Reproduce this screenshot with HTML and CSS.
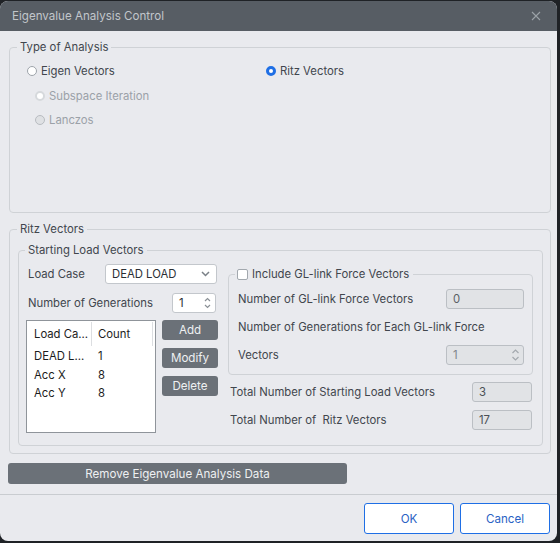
FILE: index.html
```html
<!DOCTYPE html>
<html lang="en">
<head>
    <meta charset="UTF-8">
    <title>Eigenvalue Analysis Control</title>
    <link rel="stylesheet" href="styles.css">
</head>
<body>
    <div class="window">
        <div class="titlebar">
            <span class="title">Eigenvalue Analysis Control</span>
            <svg class="close" width="10" height="10" viewBox="0 0 10 10">
                <path d="M1 1 L9 9 M9 1 L1 9" stroke="#9ba1a7" stroke-width="1.1" fill="none"/>
            </svg>
        </div>

        <div class="dialog-body">
            <fieldset class="group type-group">
                <legend>Type of Analysis</legend>
                <div class="type-grid">
                    <div class="type-col">
                        <div class="radio"><span class="dot"></span>Eigen Vectors</div>
                        <div class="radio sub disabled dim-checked"><span class="dot"></span>Subspace Iteration</div>
                        <div class="radio sub disabled"><span class="dot"></span>Lanczos</div>
                    </div>
                    <div class="type-col">
                        <div class="radio checked"><span class="dot"></span>Ritz Vectors</div>
                    </div>
                </div>
            </fieldset>

            <fieldset class="group ritz-group">
                <legend>Ritz Vectors</legend>
                <div class="ritz-inner">
                    <fieldset class="group slv-group">
                        <legend>Starting Load Vectors</legend>
                        <div class="slv-cols">
                            <div class="slv-left">
                                <div class="field-row">
                                    <span class="label lc-label">Load Case</span>
                                    <div class="select">
                                        <span>DEAD LOAD</span>
                                        <svg width="9" height="6" viewBox="0 0 9 6">
                                            <path d="M1 1 L4.5 4.5 L8 1" stroke="#7a8087" stroke-width="1.5" fill="none"/>
                                        </svg>
                                    </div>
                                </div>
                                <div class="field-row">
                                    <span class="label gen-label">Number of Generations</span>
                                    <div class="spin">
                                        <span>1</span>
                                        <svg width="7" height="14" viewBox="0 0 7 14">
                                            <path d="M1 5 L3.5 2.5 L6 5 M1 9 L3.5 11.5 L6 9" stroke="#8a9096" stroke-width="1.2" fill="none"/>
                                        </svg>
                                    </div>
                                </div>
                                <div class="list-row">
                                    <div class="list">
                                        <div class="list-head">
                                            <span class="c1">Load Ca...</span>
                                            <span class="c2">Count</span>
                                        </div>
                                        <div class="list-item"><span class="c1">DEAD L...</span><span class="c2">1</span></div>
                                        <div class="list-item"><span class="c1">Acc X</span><span class="c2">8</span></div>
                                        <div class="list-item"><span class="c1">Acc Y</span><span class="c2">8</span></div>
                                    </div>
                                    <div class="list-buttons">
                                        <button class="btn-dark">Add</button>
                                        <button class="btn-dark">Modify</button>
                                        <button class="btn-dark">Delete</button>
                                    </div>
                                </div>
                            </div>

                            <div class="slv-right">
                                <fieldset class="group gl-group">
                                    <legend><span class="checkbox"></span>Include GL-link Force Vectors</legend>
                                    <div class="gl-inner">
                                        <div class="gl-row">
                                            <span class="label">Number of GL-link Force Vectors</span>
                                            <div class="box disabled-box">0</div>
                                        </div>
                                        <div class="gl-row">
                                            <span class="label">Number of Generations for Each GL-link Force</span>
                                        </div>
                                        <div class="gl-row">
                                            <span class="label">Vectors</span>
                                            <div class="box disabled-box spin-dis">
                                                <span>1</span>
                                                <svg width="9" height="16" viewBox="0 0 9 16">
                                                    <path d="M1.5 6 L4.5 3 L7.5 6 M1.5 10 L4.5 13 L7.5 10" stroke="#a3a8ae" stroke-width="1.2" fill="none"/>
                                                </svg>
                                            </div>
                                        </div>
                                    </div>
                                </fieldset>
                                <div class="total-row first">
                                    <span class="label">Total Number of Starting Load Vectors</span>
                                    <div class="box total-box">3</div>
                                </div>
                                <div class="total-row">
                                    <span class="label">Total Number of &nbsp;Ritz Vectors</span>
                                    <div class="box total-box">17</div>
                                </div>
                            </div>
                        </div>
                    </fieldset>
                </div>
            </fieldset>

            <button class="btn-dark remove-btn">Remove Eigenvalue Analysis Data</button>
        </div>

        <div class="footer">
            <button class="btn-light">OK</button>
            <button class="btn-light">Cancel</button>
        </div>
    </div>
</body>
</html>
```

FILE: styles.css
```css
:root {
    --text: #41464d;
    --muted: #9ba1a8;
    --line: #cfd2d6;
    --panel: #e9eaee;
    --dark-btn: #6b7178;
    --blue: #1f6fe5;
}

* {
    margin: 0;
    padding: 0;
    box-sizing: border-box;
}

body {
    background: #1f2226;
    font-family: Inter, "Liberation Sans", sans-serif;
    font-size: 11.3px;
    color: var(--text);
}

.window {
    width: 557px;
    height: 540px;
    margin-top: 1px;
    background: var(--panel);
    border-radius: 8px;
    overflow: hidden;
    display: flex;
    flex-direction: column;
}

.titlebar {
    height: 30px;
    background: #575d64;
    display: flex;
    align-items: center;
    justify-content: space-between;
    padding: 0 16px 0 12px;
}

.title {
    color: #c2c6cb;
    font-size: 11.6px;
}

.dialog-body {
    padding: 8px 6px 0 9px;
    flex: 1;
    display: flex;
    flex-direction: column;
}

.group {
    border: 1px solid var(--line);
    border-radius: 4px;
    min-width: 0;
    padding: 0;
}

.group > legend {
    margin-left: 7px;
    padding: 0 3px;
    line-height: 16px;
}

.type-group {
    height: 174px;
}

.type-grid {
    display: flex;
    padding: 8px 0 0 17px;
}

.type-col {
    display: flex;
    flex-direction: column;
    gap: 8.5px;
}

.type-col:first-child {
    width: 239px;
}

.radio {
    display: flex;
    align-items: center;
    gap: 4px;
    height: 16px;
}

.radio .dot {
    width: 10px;
    height: 10px;
    border-radius: 50%;
    background: #fff;
    border: 1px solid #9ea4aa;
}

.radio.sub {
    padding-left: 8px;
}

.radio.disabled {
    color: var(--muted);
}

.radio.disabled .dot {
    background: #dfe1e4;
    border-color: #b8bcc1;
}

.radio.dim-checked .dot {
    background: #fff;
    border: 2px solid #d6d9dc;
}

.radio.checked .dot {
    border: 3px solid var(--blue);
}

.ritz-group {
    margin-top: 8px;
    height: 233px;
}

.ritz-inner {
    padding: 5px 7px 8px 8px;
}

.slv-group {
    height: 204px;
}

.slv-group > legend {
    margin-left: 6px;
}

.slv-cols {
    display: flex;
    gap: 10px;
    padding: 6px 7px 0 7px;
}

.slv-left {
    width: 192px;
    display: flex;
    flex-direction: column;
    gap: 9px;
}

.field-row {
    display: flex;
    align-items: center;
    height: 20px;
}

.label {
    white-space: nowrap;
}

.lc-label {
    width: 79px;
    padding-left: 2px;
}

.gen-label {
    width: 146px;
    padding-left: 2px;
}

.select,
.spin {
    height: 20px;
    background: #fff;
    border: 1px solid #c3c7cc;
    border-radius: 3px;
    display: flex;
    align-items: center;
    justify-content: space-between;
    padding: 0 6px 0 6px;
    color: #2a2e33;
}

.select {
    width: 112px;
}

.spin {
    width: 44px;
    padding: 0 4px 0 6px;
}

.list-row {
    display: flex;
    gap: 6px;
    margin-top: -2px;
}

.list {
    width: 130px;
    height: 113px;
    background: #fff;
    border: 1px solid #8f949a;
    color: #1c1c1c;
    padding-top: 1px;
    white-space: nowrap;
}

.list-head,
.list-item {
    display: flex;
}

.list-head {
    height: 24px;
    align-items: center;
    margin-bottom: 1px;
}

.list-head .c1,
.list-head .c2 {
    border-right: 1px solid #dcdee1;
    height: 100%;
    display: flex;
    align-items: center;
}

.list-head .c2 {
    width: 61px;
}

.list-item {
    height: 18.5px;
    align-items: center;
}

.c1 {
    width: 65px;
    padding-left: 7px;
}

.c2 {
    padding-left: 6px;
}

.list-buttons {
    display: flex;
    flex-direction: column;
    gap: 8px;
}

button {
    font-family: inherit;
    font-size: 11.6px;
    border: none;
}

.btn-dark {
    background: var(--dark-btn);
    color: #eef0f2;
    border-radius: 3px;
    width: 56px;
    height: 20px;
}

.slv-right {
    width: 305px;
    margin-top: 2px;
}

.gl-group > legend {
    margin-left: 6px;
    padding: 0 4px 0 2px;
    display: flex;
    align-items: center;
}

.gl-inner {
    padding: 7px 8px 9px 9px;
    display: flex;
    flex-direction: column;
    gap: 8px;
}

.checkbox {
    width: 11px;
    height: 11px;
    background: #fff;
    border: 1px solid #a2a8ae;
    border-radius: 2px;
    margin-right: 4px;
}

.gl-row {
    display: flex;
    justify-content: space-between;
    align-items: center;
    height: 20px;
}

.box {
    height: 20px;
    border-radius: 3px;
    display: flex;
    align-items: center;
    padding-left: 6px;
}

.disabled-box {
    width: 78px;
    background: #e1e3e6;
    border: 1px solid #bbbfc4;
    color: #5a5f65;
}

.spin-dis {
    justify-content: space-between;
    padding-right: 3px;
    color: #7f858b;
}

.total-row {
    display: flex;
    justify-content: space-between;
    align-items: center;
    height: 20px;
    margin-top: 8px;
    padding: 0 1px 0 2px;
}

.total-row.first {
    margin-top: 7px;
}

.total-box {
    width: 60px;
    background: #e1e3e6;
    border: 1px solid #bbbfc4;
    color: #4a4f55;
}

.remove-btn {
    margin-top: 9px;
    margin-left: -1px;
    width: 339px;
    height: 21px;
}

.footer {
    border-top: 1px solid #c9ccd0;
    height: 47px;
    display: flex;
    justify-content: flex-end;
    gap: 6px;
    padding: 8px 7px 0 0;
}

.btn-light {
    width: 90px;
    height: 31px;
    background: #fff;
    border: 1px solid var(--blue);
    border-radius: 3px;
    color: #2a62c4;
}
```
